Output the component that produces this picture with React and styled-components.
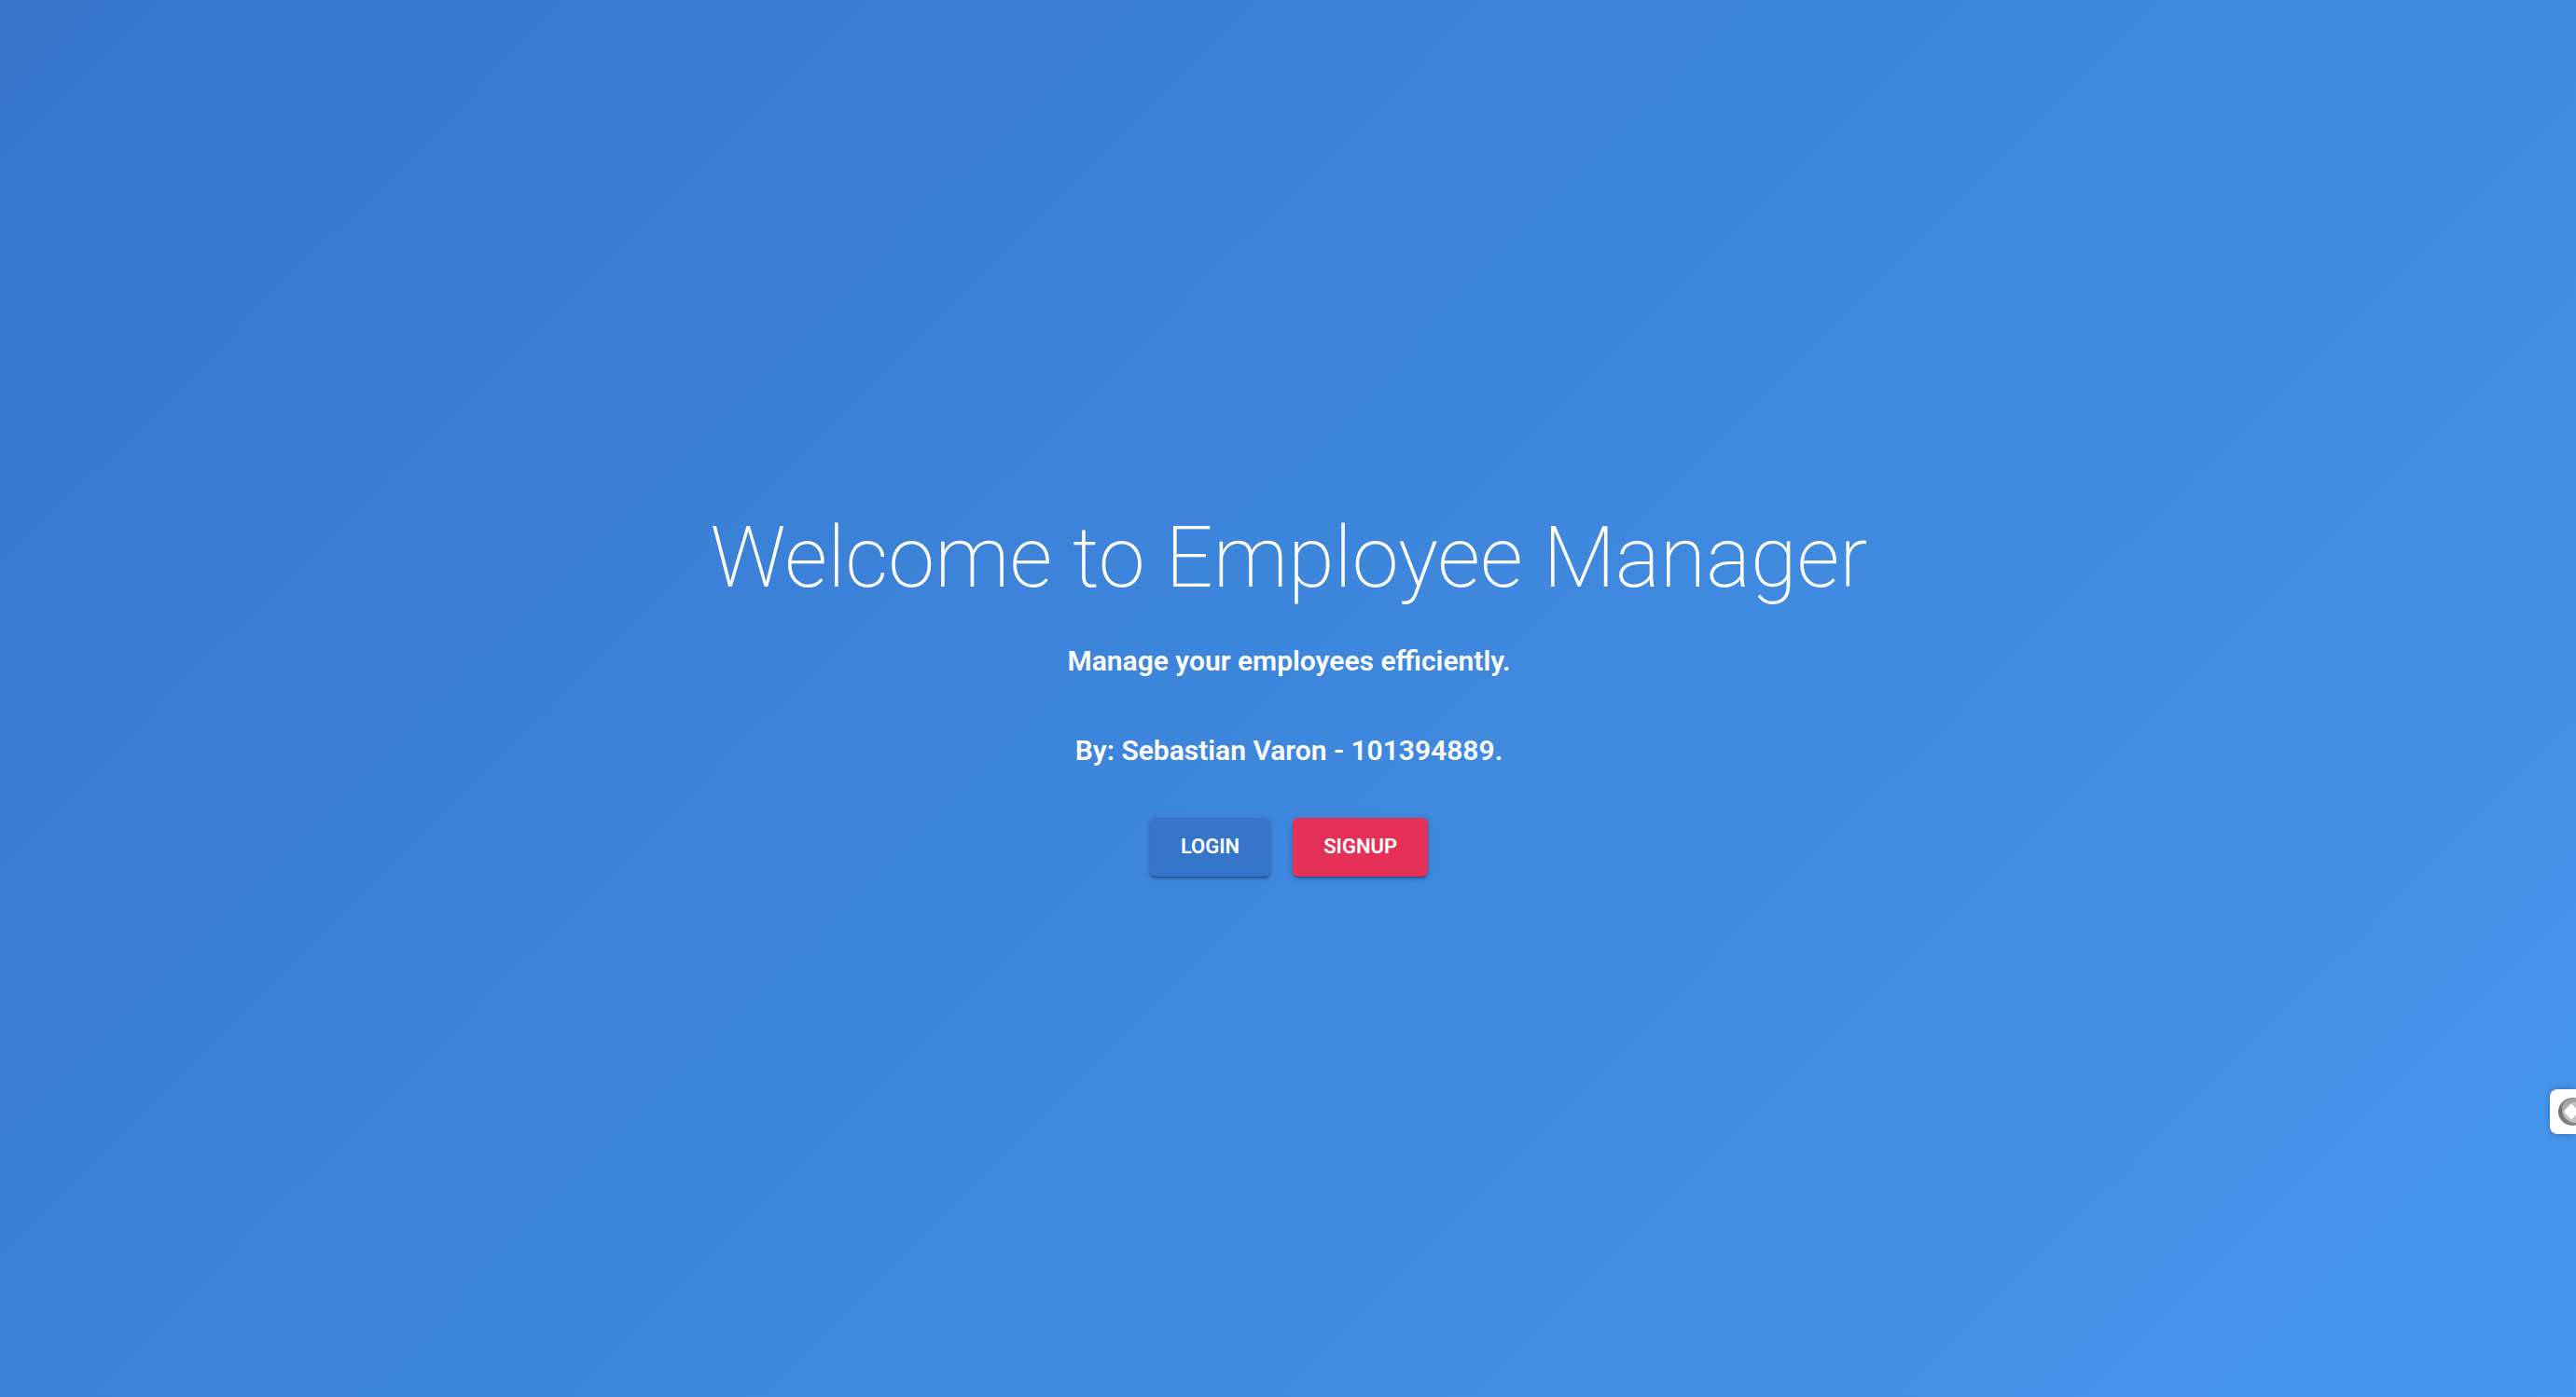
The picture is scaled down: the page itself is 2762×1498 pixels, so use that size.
import React from "react";
import styled, { createGlobalStyle } from "styled-components";

const GlobalStyle = createGlobalStyle`
  body {
    margin: 0;
    font-family: Roboto, "Liberation Sans", sans-serif;
    color: #ffffff;
  }
`;

const Page = styled.main`
  position: relative;
  box-sizing: border-box;
  display: flex;
  flex-direction: column;
  align-items: center;
  justify-content: center;
  min-height: 100vh;
  padding: 0 0 14px 2px;
  overflow: hidden;
  text-align: center;
  background: linear-gradient(135deg, #3576cb 0%, #4797ee 100%);
`;

const Title = styled.h1`
  margin: 0 0 32px;
  font-size: 90px;
  line-height: 108px;
  font-weight: 200;
`;

const Text = styled.p`
  margin: 0 0 48px;
  font-size: 30px;
  line-height: 48px;
  font-weight: 600;
`;

const Actions = styled.div`
  display: flex;
  gap: 24px;
`;

const Button = styled.button`
  height: 63px;
  padding: 0 33px;
  border: 0;
  border-radius: 6px;
  background: ${(p) => p.$color};
  color: inherit;
  font: inherit;
  font-size: 22px;
  line-height: 32px;
  font-weight: 600;
  text-transform: uppercase;
  cursor: pointer;
  box-shadow:
    0 3px 1px -2px rgba(0, 0, 0, 0.2),
    0 2px 3px rgba(0, 0, 0, 0.24),
    0 1px 8px rgba(0, 0, 0, 0.12);
`;

const SideTab = styled.button`
  position: absolute;
  top: 78%;
  right: 0;
  width: 28px;
  height: 48px;
  padding: 0 0 0 8px;
  border: 0;
  border-radius: 8px 0 0 8px;
  background: #ffffff;
  overflow: hidden;
  cursor: pointer;
  box-shadow: 0 0 8px rgba(0, 0, 0, 0.25);

  svg {
    display: block;
  }
`;

const Badge = () => (
  <svg width="32" height="32" viewBox="0 0 32 32" aria-hidden="true">
    <defs>
      <linearGradient id="ring" x1="0" y1="0" x2="0" y2="1">
        <stop offset="0" stopColor="#949494" />
        <stop offset="0.5" stopColor="#707070" />
        <stop offset="1" stopColor="#868686" />
      </linearGradient>
      <linearGradient id="disc" x1="0" y1="0" x2="0" y2="1">
        <stop offset="0" stopColor="#9c9c9c" />
        <stop offset="1" stopColor="#c4c4c4" />
      </linearGradient>
    </defs>
    <circle cx="16" cy="16" r="15" fill="url(#ring)" />
    <circle cx="18" cy="14" r="13" fill="url(#disc)" />
    <circle cx="19" cy="17" r="11" fill="#c2c2c2" />
    <path
      d="M15 9 22 16 15 23 8 16Z"
      fill="#ffffff"
      stroke="#ffffff"
      strokeWidth="2"
      strokeLinejoin="round"
    />
  </svg>
);

export default function App() {
  return (
    <>
      <GlobalStyle />
      <Page>
        <Title>Welcome to Employee Manager</Title>
        <Text>Manage your employees efficiently.</Text>
        <Text>By: Sebastian Varon - 101394889.</Text>
        <Actions>
          <Button type="button" $color="#3576cb">Login</Button>
          <Button type="button" $color="#e53158">Signup</Button>
        </Actions>
        <SideTab type="button" aria-label="Open side panel">
          <Badge />
        </SideTab>
      </Page>
    </>
  );
}
